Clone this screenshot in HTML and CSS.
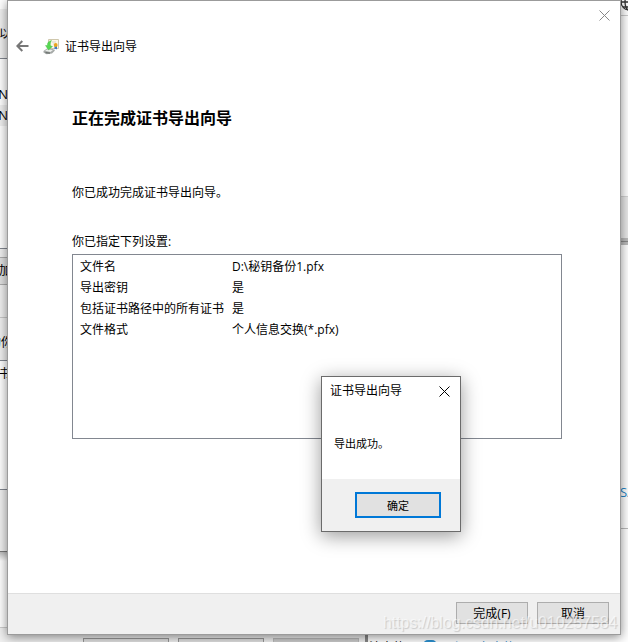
FILE: index.html
```html
<!DOCTYPE html>
<html lang="zh-CN">
<head>
<meta charset="utf-8">
<title>证书导出向导</title>
<link rel="stylesheet" href="styles.css">
</head>
<body>
<div class="desktop">
  <div class="strip strip-left">
    <div class="seg s-top"></div>
    <div class="seg s-tab"><span>以</span></div>
    <div class="seg s-head"></div>
    <div class="seg s-row"><span class="latin">N</span></div>
    <div class="seg s-row alt"><span class="latin">N</span></div>
    <div class="seg s-list"></div>
    <div class="seg s-gap"></div>
    <div class="seg s-button"><span>加</span></div>
    <div class="seg s-panel"></div>
    <div class="seg s-label"><span class="pair">的你</span></div>
    <div class="seg s-box"><span>书</span></div>
    <div class="seg s-lower"></div>
    <div class="seg s-under"></div>
    <div class="seg s-foot"></div>
  </div>
  <div class="strip strip-right">
    <div class="r-top"><svg width="18" height="18" viewBox="0 0 18 18"><circle cx="9" cy="9" r="8"/><path d="M9 1v16M1 9h16M3 4h12M3 14h12"/><ellipse cx="9" cy="9" rx="4" ry="8"/></svg></div>
    <div class="r-page"></div>
    <div class="r-bar"></div>
    <div class="r-edge"></div>
    <div class="r-text"><span>SA</span></div>
    <div class="r-bottom"></div>
  </div>
  <div class="under">
    <div class="under-window"><i></i><i></i><i class="dark"></i></div>
    <div class="under-page"><span>法中的</span><b></b><span class="blue">还原各自的</span></div>
  </div>

  <main class="wizard">
    <div class="wizard-top">
      <svg class="close" width="11" height="11" viewBox="0 0 11 11"><path d="M.5.5l10 10M10.5.5l-10 10"/></svg>
    </div>
    <header class="wizard-head">
      <svg class="back" width="13" height="12" viewBox="0 0 13 12"><path d="M12.500 6H1.500M6.300 1L1.300 6l5 5"/></svg>
      <svg class="cert" width="17" height="17" viewBox="0 0 17 17">
        <path d="M5.500 1.500h10v9h-10z" fill="#fbf7e8" stroke="#cfc7ac"/>
        <path d="M9 4h4M10 6h1" stroke="#d9d5c6"/>
        <path d="M11.500 8v3.500l1.200-.8 1.300.8V8z" fill="#3978c5"/>
        <circle cx="12.700" cy="7" r="1.900" fill="#e9a51d"/>
        <path d="M.5 13l3.500-2.500 6 .5 2 1.500-3 3-5.500.8L.5 14.500z" fill="#a6aaa8"/>
        <path d="M2 12.800l2.500-1.600 5.500.8-2.500 2z" fill="#eceeec"/>
        <path d="M2.500 14.700l4.500.4" stroke="#5c625f"/>
        <path d="M8.500 2.500C5.500 3 4 5 4.500 7.500H2.500L5.500 12l4-3.500-2-.7c-.5-2 0-3.500 1-5.300z" fill="#55d851" stroke="#43b541" stroke-width=".4"/>
      </svg>
      <span>证书导出向导</span>
    </header>
    <section class="wizard-body">
      <h1>正在完成证书导出向导</h1>
      <p class="message">你已成功完成证书导出向导。</p>
      <p class="caption">你已指定下列设置:</p>
      <dl class="settings">
        <dt>文件名</dt><dd>D:\秘钥备份1.pfx</dd>
        <dt>导出密钥</dt><dd>是</dd>
        <dt>包括证书路径中的所有证书</dt><dd>是</dd>
        <dt>文件格式</dt><dd>个人信息交换(*.pfx)</dd>
      </dl>
    </section>
    <footer class="wizard-foot">
      <button>完成(F)</button>
      <button>取消</button>
    </footer>
  </main>

  <div class="alert">
    <div class="alert-title"><span>证书导出向导</span>
      <svg width="11" height="11" viewBox="0 0 11 11"><path d="M.5.5l10 10M10.5.5l-10 10"/></svg>
    </div>
    <p>导出成功。</p>
    <div class="alert-foot"><button>确定</button></div>
  </div>
  <div class="watermark">https://blog.csdn.net/u010257584</div>
</div>
</body>
</html>
```
FILE: styles.css
```css
* { box-sizing: border-box; }
body { margin: 0; font: 12px/21px "Open Sans", "Noto Sans CJK SC", sans-serif; color: #000; }
h1, p, dl, dd { margin: 0; }
.desktop { position: relative; width: 628px; height: 642px; overflow: hidden; background: #f0f0f0; }

.strip { position: absolute; top: 0; height: 642px; display: flex; flex-direction: column; overflow: hidden; }
.strip-left { left: 0; width: 8px; }
.strip-right { left: 620px; width: 8px; }
.seg { flex: none; width: 8px; overflow: hidden; background: #fff; display: flex; justify-content: flex-end; white-space: nowrap; }
.seg span { flex: none; margin-right: -3px; }
.seg .latin { font-size: 13px; margin-right: 0; }
.seg .pair { margin-right: -5px; }
.s-top { height: 9px; }
.s-tab { height: 50px; background: #f0f0f0; border-bottom: 1px solid #828790; padding-top: 14px; }
.s-head { height: 25px; }
.s-row { height: 21px; }
.s-row.alt { background: #f0f0f0; }
.s-list { height: 123px; border-bottom: 1px solid #828790; }
.s-gap { height: 8px; background: #f0f0f0; }
.s-button { height: 28px; background: #e1e1e1; border: solid #adadad; border-width: 1px 0; padding-top: 2px; }
.s-panel { height: 33px; background: #f0f0f0; border-bottom: 1px solid #c8c8c8; }
.s-label { height: 43px; background: #f0f0f0; border-bottom: 1px solid #828790; padding-top: 14px; }
.s-box { height: 129px; padding-top: 2px; border-bottom: 1px solid #828790; }
.s-lower { height: 62px; background: #f0f0f0; border-bottom: 1px solid #777; }
.s-under { height: 76px; background: linear-gradient(#bbb, #fff 9px); border-bottom: 1px solid #ccc; }
.s-foot { height: 14px; background: #f0f0f0; }

.r-top { height: 16px; background: #fff; border-bottom: 1px solid #ccc; overflow: hidden; }
.r-top svg { display: block; margin-top: -7px; fill: none; stroke: #333; stroke-width: 1.300; }
.r-page { height: 180px; background: #fff; }
.r-bar { height: 42px; background: #e9e9e9; border-top: 1px solid #d4d4d4; }
.r-edge { height: 7px; background: linear-gradient(#bbb 3px, #888 3px 4px, #bbb 4px); }
.r-text { height: 284px; background: #fff; border-bottom: 1px solid #bbb; padding-top: 237px; color: #2585c7; font-size: 13px; }
.r-bottom { flex: 1; background: #fff; }

.under { position: absolute; left: 0; top: 635px; width: 628px; height: 7px; display: flex; overflow: hidden; }
.under-window { width: 368px; background: #f0f0f0; border-right: 3px solid #888; padding: 3px 0 0 83px; display: flex; gap: 9px; }
.under-window i { flex: none; width: 86px; height: 10px; background: #e1e1e1; border: 1px solid #999; }
.under-window .dark { background: #ccc; border-color: #bbb; }
.under-page { flex: 1; background: #fff; display: flex; gap: 18px; padding: 2px 0 0 1px; white-space: nowrap; }
.under-page b { width: 14px; height: 14px; margin-top: 3px; border-radius: 5px; background: #2b91d1; }
.under-page .blue { color: #2585c7; }

.wizard { position: absolute; left: 7px; top: 0; width: 614px; height: 635px; display: flex; flex-direction: column; background: #fff; border: 1px solid #9b9b9b; box-shadow: 0 2px 10px rgba(0, 0, 0, .48); }
.wizard-top { height: 28px; display: flex; justify-content: flex-end; padding: 9px 10px 0 0; }
svg path { fill: none; }
.close { stroke: #888; }
.wizard-head { height: 34px; display: flex; align-items: center; padding-left: 8px; }
.back { stroke: #777; stroke-width: 2; margin-right: 14px; }
.cert { margin-right: 5px; }
.cert path[fill] { fill: revert-layer; }
.wizard-body { flex: 1; padding: 42px 58px 0 64px; }
h1 { font-size: 16px; line-height: 26px; }
.message { margin-top: 51px; }
.caption { margin-top: 28px; }
.settings { height: 185px; margin-top: 2px; padding: 1px 7px; border: 1px solid #828790; display: grid; grid-template-columns: 152px 1fr; grid-auto-rows: 21px; white-space: nowrap; }
.wizard-foot { height: 41px; flex: none; display: flex; justify-content: flex-end; gap: 9px; padding: 8px 11px 0 0; background: #f0f0f0; border-top: 1px solid #dfdfdf; }
button { font: inherit; color: #000; background: #e1e1e1; border: 1px solid #adadad; padding: 0; }
.wizard-foot button { width: 72px; height: 22px; line-height: 20px; padding-top: 1px; }

.alert { position: absolute; left: 321px; top: 376px; width: 140px; height: 156px; display: flex; flex-direction: column; background: #fff; border: 1px solid #6b6b6b; box-shadow: 0 4px 18px rgba(0, 0, 0, .4); }
.alert-title { height: 30px; display: flex; align-items: flex-start; justify-content: space-between; padding: 3px 10px 0 8px; }
.alert-title svg { stroke: #000; margin-top: 6px; }
.alert p { flex: 1; padding: 26px 0 0 12px; font-size: 11px; }
.alert-foot { height: 52px; background: #f0f0f0; padding: 13px 0 0 33px; }
.alert-foot button { display: block; width: 86px; height: 26px; border: 2px solid #0078d7; font-size: 11px; }
.watermark { position: absolute; left: 383px; top: 612px; font: 15.850px/21px "Liberation Sans", sans-serif; color: rgba(255, 255, 255, .6); text-shadow: 1px 1px 1px rgba(0, 0, 0, .16); white-space: nowrap; }
```
